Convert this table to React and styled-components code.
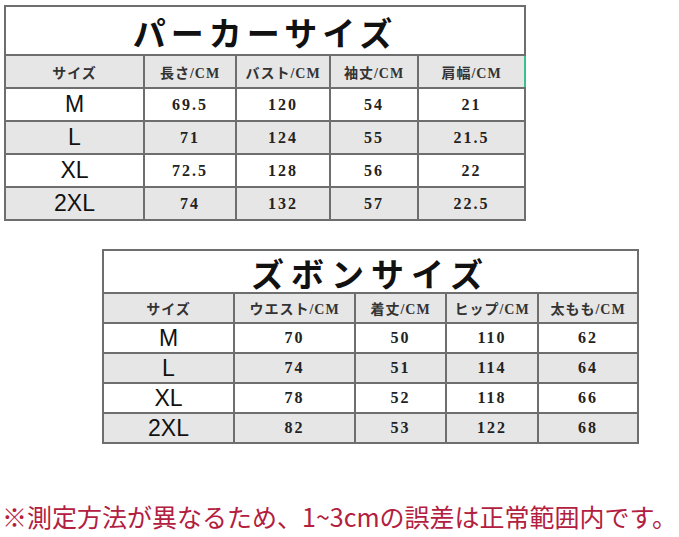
import React from 'react';
import styled, { createGlobalStyle } from 'styled-components';

const GlobalStyle = createGlobalStyle`
	html, body {
		margin: 0;
		padding: 0;
		background: #ffffff;
	}
	body {
		font-family: 'Liberation Serif', 'Noto Sans CJK JP', serif;
	}
`;

const tops = {
	title: 'パーカーサイズ',
	cols: [139, 92, 94, 88, 107],
	heads: ['サイズ', '長さ/CM', 'バスト/CM', '袖丈/CM', '肩幅/CM'],
	rows: [
		['M', '69.5', '120', '54', '21'],
		['L', '71', '124', '55', '21.5'],
		['XL', '72.5', '128', '56', '22'],
		['2XL', '74', '132', '57', '22.5'],
	],
};

const pants = {
	title: 'ズボンサイズ',
	cols: [131, 121, 91, 92, 100],
	heads: ['サイズ', 'ウエスト/CM', '着丈/CM', 'ヒップ/CM', '太もも/CM'],
	rows: [
		['M', '70', '50', '110', '62'],
		['L', '74', '51', '114', '64'],
		['XL', '78', '52', '118', '66'],
		['2XL', '82', '53', '122', '68'],
	],
};

export default function App() {
	return (
		<Page>
			<GlobalStyle />
			<SizeTable data={tops} offset={4} titleH={43} headH={31} rowH={31} top={5} spacing={5} marker />
			<SizeTable data={pants} offset={102} titleH={37} headH={28} rowH={28} top={28} spacing={7} />
			<Note>※測定方法が異なるため、1~3cmの誤差は正常範囲内です。</Note>
		</Page>
	);
}

function SizeTable({ data, offset, titleH, headH, rowH, top, spacing, marker }) {
	return (
		<Table $left={offset} $top={top}>
			<colgroup>
				{data.cols.map((w, i) => (
					<col key={i} style={{ width: w }} />
				))}
			</colgroup>
			<tbody>
				<tr>
					<TitleCell colSpan={5} $h={titleH} $spacing={spacing}>
						{data.title}
					</TitleCell>
				</tr>
				<tr>
					{data.heads.map((h, i) => (
						<HeadCell key={i} $h={headH} $marker={marker && i === 4}>
							{h}
						</HeadCell>
					))}
				</tr>
				{data.rows.map((r, ri) => (
					<tr key={ri}>
						{r.map((v, ci) =>
							ci === 0 ? (
								<SizeCell key={ci} $h={rowH} $shade={ri % 2 === 1}>
									{v}
								</SizeCell>
							) : (
								<ValueCell key={ci} $h={rowH} $shade={ri % 2 === 1}>
									{v}
								</ValueCell>
							)
						)}
					</tr>
				))}
			</tbody>
		</Table>
	);
}

const Page = styled.div`
	width: 679px;
	height: 537px;
	display: flex;
	flex-direction: column;
	align-items: flex-start;
	overflow: hidden;
`;

const Table = styled.table`
	border-collapse: collapse;
	table-layout: fixed;
	margin-left: ${(p) => p.$left}px;
	margin-top: ${(p) => p.$top}px;
	td {
		border: 2px solid #6e6e6e;
		padding: 0;
		text-align: center;
		vertical-align: middle;
		overflow: hidden;
		white-space: nowrap;
	}
`;

const TitleCell = styled.td`
	height: ${(p) => p.$h}px;
	background: #ffffff;
	font-family: 'Noto Sans CJK JP', sans-serif;
	font-weight: 700;
	font-size: 33px;
	letter-spacing: ${(p) => p.$spacing}px;
	color: #111;
	line-height: 1;
	overflow: visible !important;
	padding-top: 4px !important;
`;

const HeadCell = styled.td`
	height: ${(p) => p.$h}px;
	background: #e6e6e6;
	font-family: 'Liberation Serif', 'Noto Sans CJK JP', serif;
	font-weight: 700;
	font-size: 14px;
	color: #333;
	letter-spacing: 1px;
	${(p) => p.$marker && 'border-right-color: #3cc08a !important;'}
`;

const SizeCell = styled.td`
	height: ${(p) => p.$h}px;
	background: ${(p) => (p.$shade ? '#e6e6e6' : '#ffffff')};
	font-family: 'Liberation Sans', Arial, sans-serif;
	font-size: 23px;
	color: #111;
`;

const ValueCell = styled.td`
	height: ${(p) => p.$h}px;
	background: ${(p) => (p.$shade ? '#e6e6e6' : '#ffffff')};
	font-family: 'Liberation Serif', serif;
	font-weight: 700;
	font-size: 16px;
	letter-spacing: 2px;
	color: #222;
`;

const Note = styled.div`
	margin-top: 57px;
	margin-left: 2px;
	font-family: 'Noto Sans CJK JP', sans-serif;
	font-size: 25px;
	line-height: 30px;
	color: #b3203f;
	white-space: nowrap;
`;
